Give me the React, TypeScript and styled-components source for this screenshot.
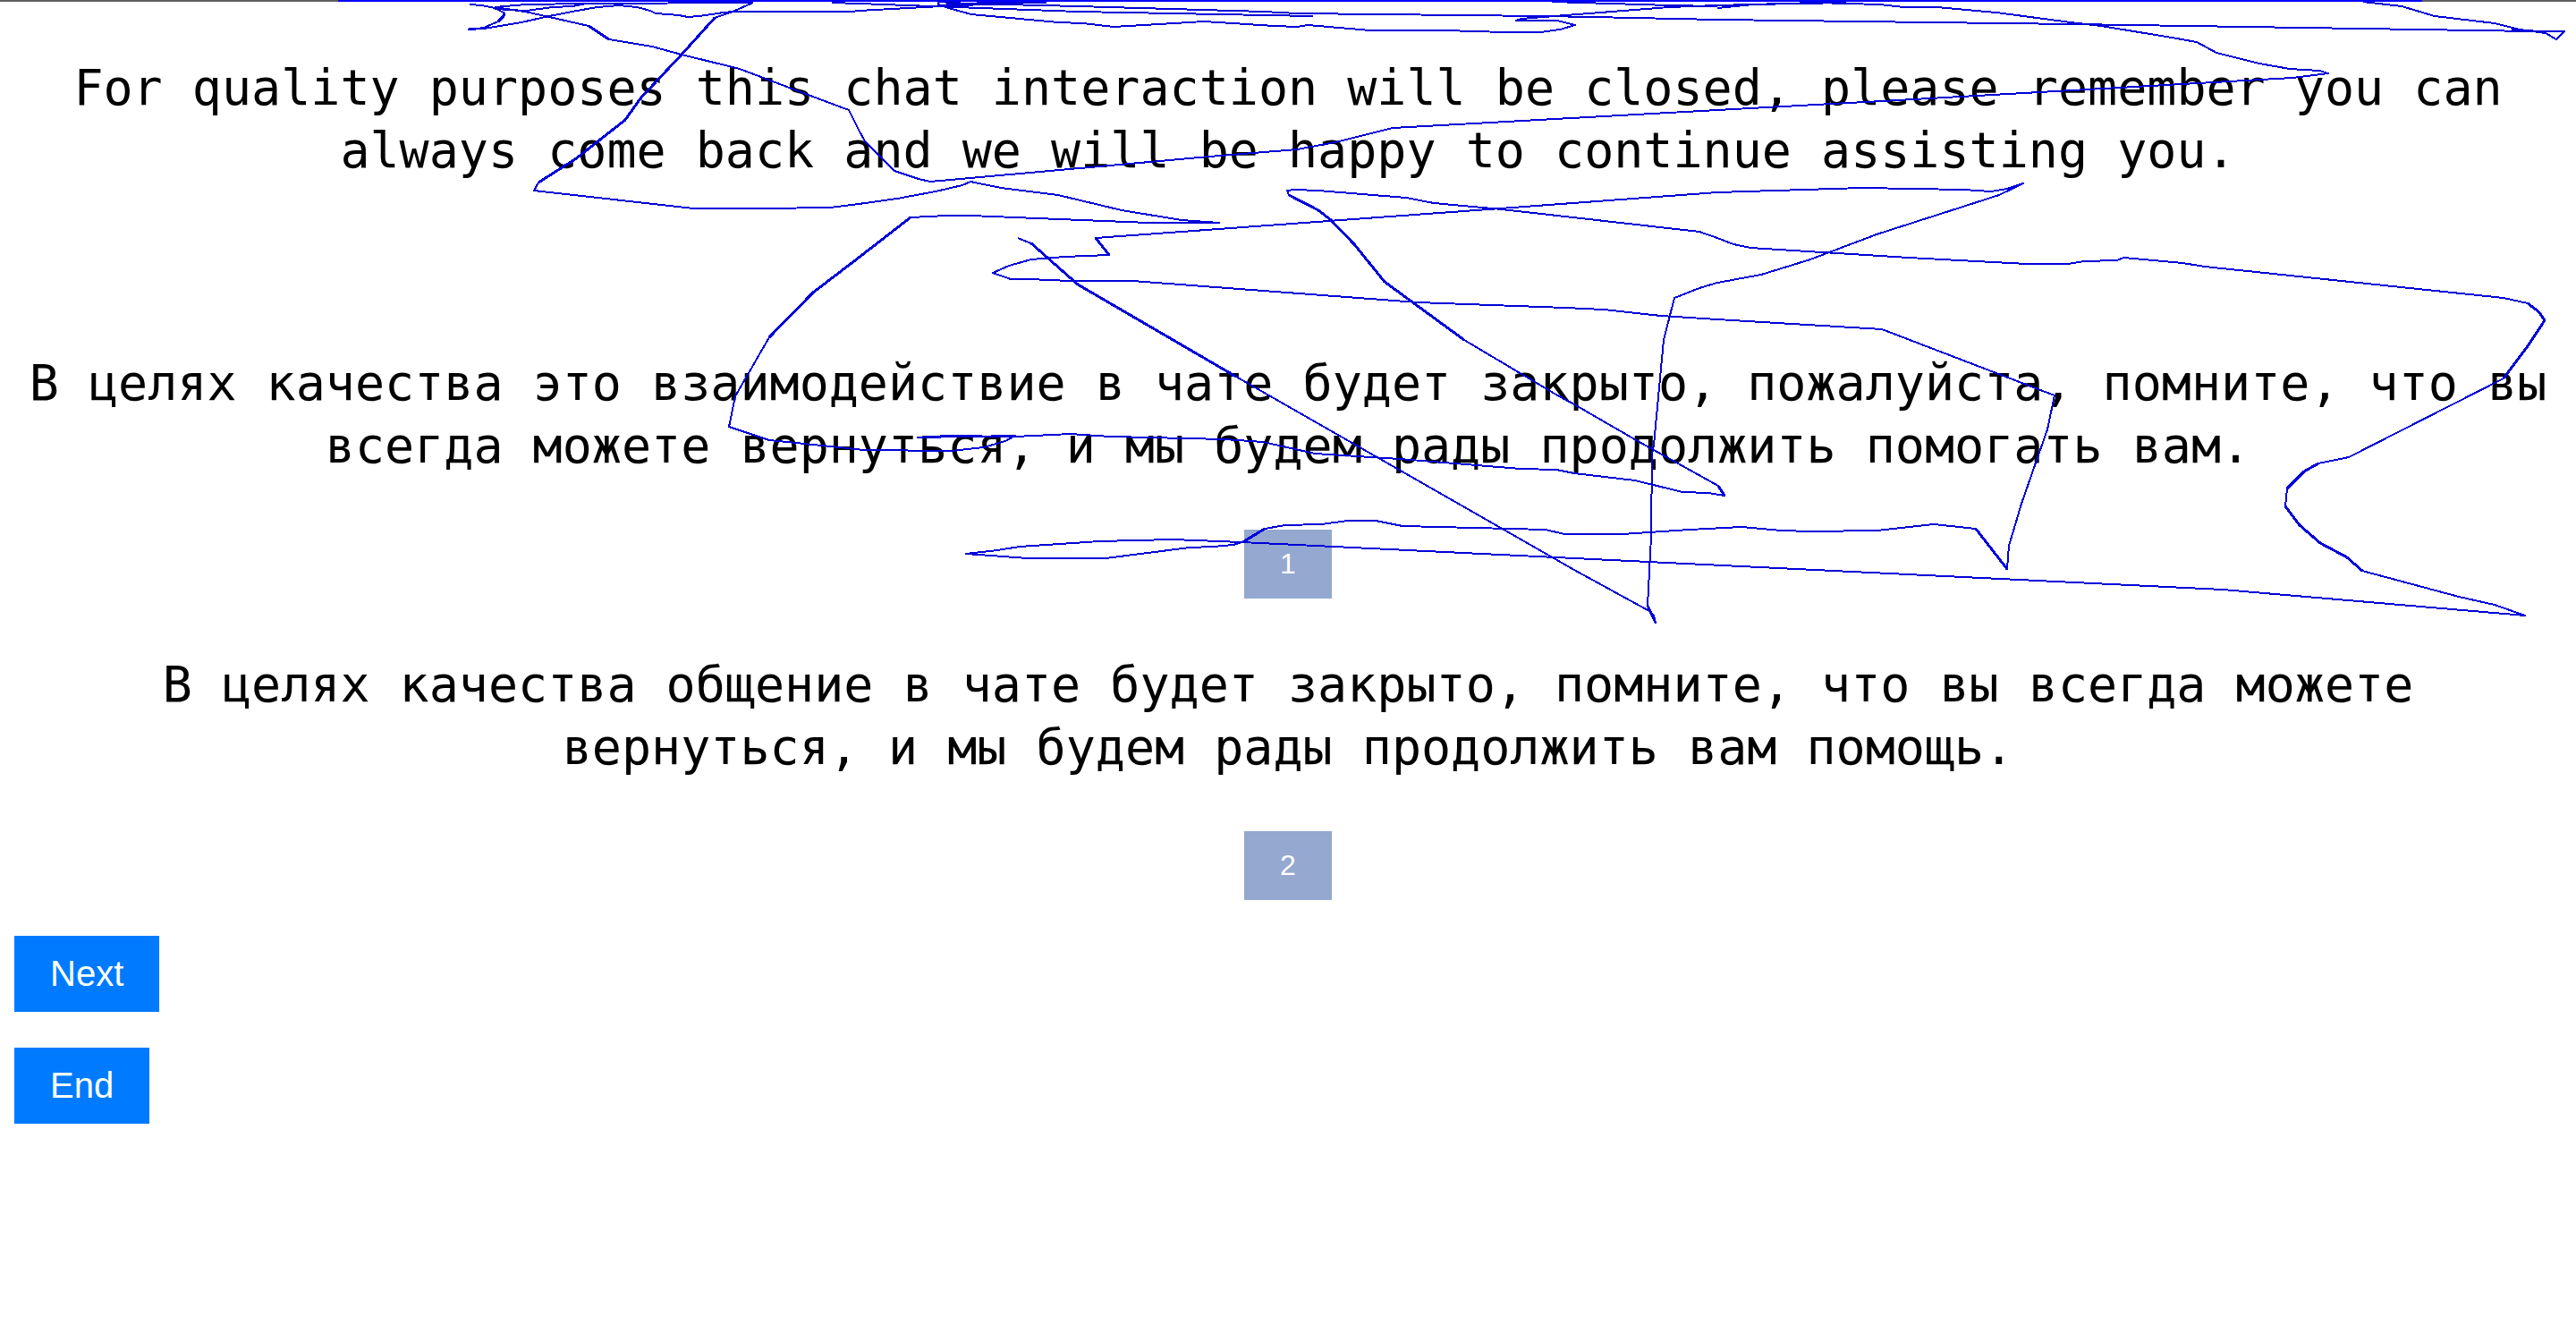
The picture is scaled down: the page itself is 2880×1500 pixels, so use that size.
import React from "react";
import styled, { createGlobalStyle } from "styled-components";

const GlobalStyle = createGlobalStyle`
  body {
    margin: 0;
    background: #fff;
    color: #000;
  }
`;

const Page = styled.main`
  position: relative;
  display: flex;
  flex-direction: column;
  align-items: center;
  padding: 0 16px 40px;
  border-top: 2px solid #606060;
`;

const Message = styled.p`
  margin: 61px 0 59px;
  min-height: 70px;
  font-family: Consolas, "DejaVu Sans Mono", monospace;
  font-size: 55px;
  line-height: 70px;
  text-align: center;
`;

const Spacer = styled.div`
  height: 70px;
`;

const Option = styled.section`
  display: flex;
  flex-direction: column;
  align-items: center;
`;

const Button = styled.button`
  padding: 20px 40px;
  border: 0;
  font-family: Arial, "Liberation Sans", sans-serif;
  color: #fff;
  cursor: pointer;
`;

const ChoiceButton = styled(Button)`
  background: #94a8d0;
  font-size: 32px;
  line-height: 37px;
`;

const ActionButton = styled(Button)`
  background: #007bff;
  font-size: 40px;
  line-height: 45px;
`;

const Actions = styled.div`
  align-self: stretch;
  display: flex;
  flex-direction: column;
  align-items: flex-start;
  gap: 40px;
  margin-top: 40px;
`;

const Trail = styled.svg`
  position: absolute;
  top: -2px;
  left: 0;
  width: 100%;
  pointer-events: none;
`;

const strokes = [
  // along the top edge
  "525,5 539,6 553,9 563,14 563,18 557,24 541,31 524,33 541,32 583,25 614,18 645,12 668,8 692,6 712,8 727,12 733,15 759,17 769,19 782,18 809,14 819,13 952,13 960,12 1052,7 1150,3",
  "524,32 535,32",
  "553,8 588,5 655,4 842,3",
  "553,10 588,12 618,8 640,7 655,4",
  "930,3 960,4 1205,13 1468,18",
  "1049,2 1082,4 1205,7 1413,13 1450,15 1725,18 1780,19 1920,22 2318,27 2832,35 2867,35 2858,44 2846,37 2817,33 2789,26 2722,18 2685,7 2642,2",
  "1050,6 1100,3 1170,3",
  "2808,33 2840,35",
  "1735,2 1866,6 1920,7",
  "1920,9 1960,5 2064,3",
  // upper loop
  "553,8 566,10 587,13 614,19 658,29 681,44 729,52 762,61 827,77 906,107 949,123 960,145 967,158 1000,191 1027,200 1040,203 1352,175 1450,167 1493,159 1557,143 1920,123 2104,113 2563,87 2603,82 2593,79 2560,77 2526,71 2478,59 2456,47 2428,42 2349,29 2315,25 2232,14 2165,8 2128,8 2101,5 2030,3 1920,6 1866,8 1738,18 1701,21 1695,23 1741,23 1761,28 1744,33 1722,36 1682,36 1615,34 1532,34 1462,28 1450,30 1425,29 1346,24 1245,30 1211,26 1183,25 1086,16 1064,10 1049,5 1049,2",
  // main scribble
  "842,3 819,13 799,20 762,61 716,110 699,134 643,178 602,204 597,213 775,233 854,233 928,232 960,228 1003,222 1046,214 1076,207 1085,203 1119,210 1183,218 1254,235 1321,246 1363,249 1284,249 1085,241 1058,241 1018,243 960,288 909,327 860,377 822,443 815,477 860,492 929,499 965,503 1063,504 1100,500 1124,493 1135,487 1026,489 1060,487 1135,488 1197,485 1241,488 1369,491 1412,494 1470,507 1565,513 1700,524 1740,525 1760,529 1828,537 1881,550 1910,551 1928,554 1921,543 1831,493 1760,452 1738,440 1637,380 1548,315 1514,273 1488,246 1474,235 1441,218 1439,213 1447,212 1474,213 1572,221 1603,227 1679,234 1900,259 1920,266 1938,273 1957,277 2134,288 2266,295 2312,295 2330,292 2367,291 2374,288 2440,294 2465,298 2799,333 2826,339 2838,348 2845,358 2826,387 2799,423 2626,511 2592,518 2576,527 2557,546 2555,566 2571,587 2594,607 2624,623 2641,638 2749,667 2789,676 2806,682 2823,688 2485,659 1760,624 1388,606 1311,603 1229,605 1140,611 1115,615 1080,619 1149,624 1236,624 1330,612 1357,611 1379,609 1391,605 1414,591 1437,587 1477,586 1507,582 1538,582 1568,588 1728,592 1749,597 1814,597 1889,592 1947,589 1992,593 2024,594 2099,593 2162,586 2209,591 2244,636 2246,610 2260,563 2289,480 2297,442 2104,368 1920,357 1857,353 1793,346 1750,344 1585,338 1266,314 1196,314 1150,312 1130,312 1110,305 1128,297 1153,290 1190,287 1240,285 1225,266 1664,234 1920,215 2082,210 2195,212 2226,214 2244,211 2262,205 2235,218 2098,262 2024,290 1969,307 1920,316 1900,322 1872,333 1860,380 1849,497 1847,507 1846,600 1842,677 1851,696 1849,688 1844,683 1760,637 1382,421 1205,318 1171,288 1155,273 1138,266",
];

// parts of the trail where the pointer moved steeply and the line is wider
const heavyStrokes = [
  "799,20 762,61 716,110 699,134 643,178 602,204",
  "658,29 681,44",
  "563,14 563,18 557,24",
  "1018,243 960,288 909,327 860,377",
  "1153,272 1171,288 1205,318 1382,421",
  "1441,218 1474,235 1488,246 1514,273 1548,315 1637,380",
  "1225,266 1240,285",
  "2826,339 2838,348 2845,358 2826,387 2799,423",
  "2592,518 2576,527 2557,546",
  "2555,566 2571,587 2594,607 2624,623 2641,638",
  "2209,591 2244,636",
  "1391,605 1414,591",
  "1921,543 1928,554",
  "1842,677 1851,696",
];

const MouseTrail = () => (
  <Trail viewBox="0 0 2880 700" aria-hidden="true">
    <g fill="none" stroke="#0000d8" strokeLinejoin="round" shapeRendering="crispEdges">
      <g strokeWidth="2">
        {strokes.map((points, i) => (
          <polyline key={i} points={points} />
        ))}
      </g>
      <g strokeWidth="3">
        {heavyStrokes.map((points, i) => (
          <polyline key={i} points={points} />
        ))}
      </g>
      <path d="M378 1H2708" stroke="#0000ff" strokeWidth="2" />
    </g>
  </Trail>
);

const source =
  "For quality purposes this chat interaction will be closed, please remember you can always come back and we will be happy to continue assisting you.";

const translations = [
  "В целях качества это взаимодействие в чате будет закрыто, пожалуйста, помните, что вы всегда можете вернуться, и мы будем рады продолжить помогать вам.",
  "В целях качества общение в чате будет закрыто, помните, что вы всегда можете вернуться, и мы будем рады продолжить вам помощь.",
];

export default function App() {
  return (
    <>
      <GlobalStyle />
      <Page>
        <Message>{source}</Message>
        <Spacer />
        {translations.map((text, i) => (
          <Option key={i}>
            <Message>{text}</Message>
            <ChoiceButton type="button">{i + 1}</ChoiceButton>
          </Option>
        ))}
        <Actions>
          <ActionButton type="button">Next</ActionButton>
          <ActionButton type="button">End</ActionButton>
        </Actions>
        <MouseTrail />
      </Page>
    </>
  );
}
